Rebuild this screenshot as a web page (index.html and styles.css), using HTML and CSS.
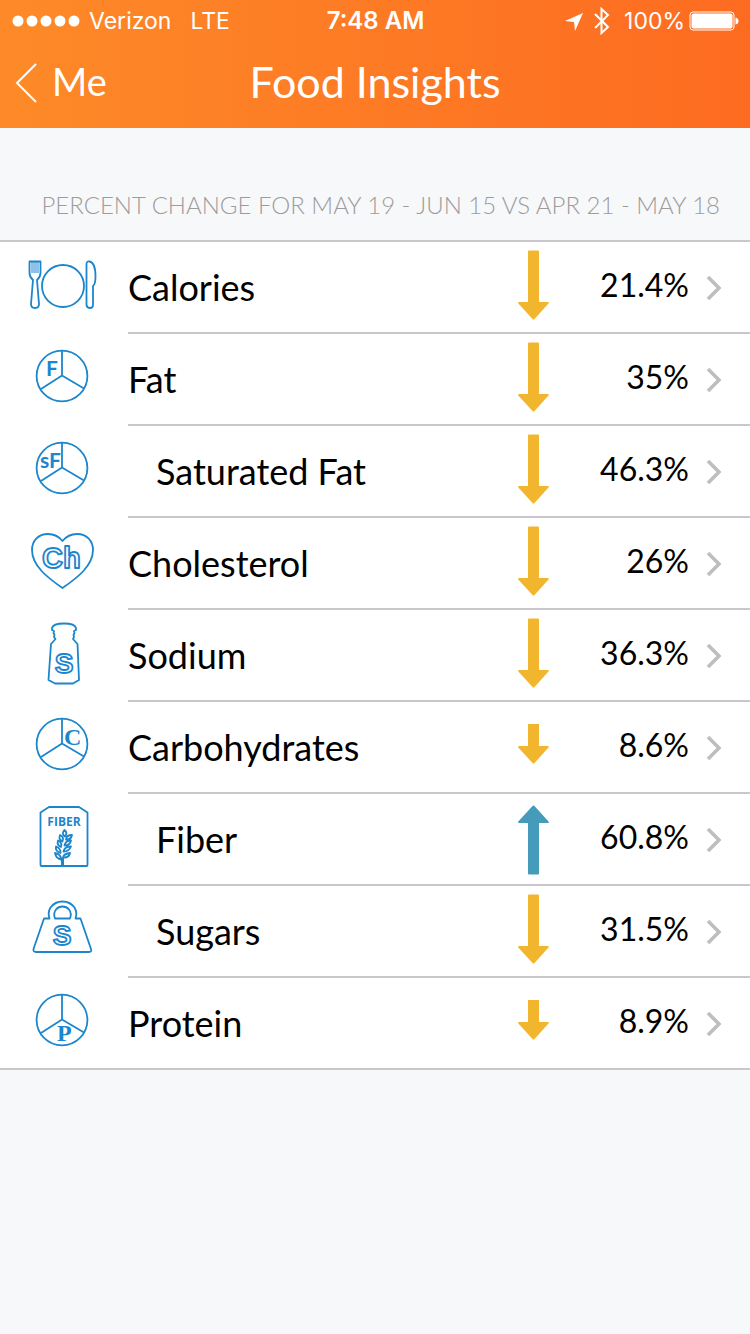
FILE: index.html
```html
<!DOCTYPE html>
<html lang="en">
<head>
    <meta charset="UTF-8">
    <meta name="viewport" content="width=device-width, initial-scale=1.0">
    <title>Food Insights</title>
    <link rel="stylesheet" href="styles.css">
</head>
<body>
    <!-- shared shapes -->
    <svg class="defs" aria-hidden="true">
        <symbol id="pie" viewBox="0 0 72 72">
            <circle cx="36" cy="33" r="25.4"/>
            <path d="M36 8v24.500M36 32.500L15 46M36 32.500L58 45.500"/>
        </symbol>
        <symbol id="down" viewBox="0 0 32 76">
            <path d="M12 1.500h9q1 0 1 1V53h9q1.500.5.5 1.500L17.500 70q-1 1-2 0L1.300 54.500Q.5 53.500 2 53h9V2.500q0-1 1-1z"/>
        </symbol>
        <symbol id="down-small" viewBox="0 0 32 76">
            <path d="M11 15h11v22h9q1.500.5.5 1.500L17.500 54q-1 1-2 0L1.300 38.500Q.5 37.500 2 37h9z"/>
        </symbol>
        <symbol id="up" viewBox="0 0 32 76">
            <path d="M12 73.500h9q1 0 1-1V22h9q1.500-.5.5-1.500L17.500 5q-1-1-2 0L1.300 20.500Q.5 21.500 2 22h9v50.500q0 1 1 1z"/>
        </symbol>
        <symbol id="chevron" viewBox="0 0 16 26">
            <path d="M2 2l11 11L2 24"/>
        </symbol>
    </svg>

    <header class="header">
        <div class="status">
            <div class="status-left">
                <svg class="signal" viewBox="0 0 68 12">
                    <circle cx="6" cy="6" r="5.500"/>
                    <circle cx="20" cy="6" r="5.500"/>
                    <circle cx="34" cy="6" r="5.500"/>
                    <circle cx="48" cy="6" r="5.500"/>
                    <circle cx="62" cy="6" r="5.500"/>
                </svg>
                <span>Verizon</span>
                <span class="network">LTE</span>
            </div>
            <div class="time">7:48 AM</div>
            <div class="status-right">
                <svg class="location" viewBox="0 0 20 20"><path d="M19 2L11 20 10 11 1 10z"/></svg>
                <svg class="bluetooth" viewBox="0 0 18 28"><path d="M2 7l13 13-6.500 6V2L15 8 2 21"/></svg>
                <span>100%</span>
                <svg class="battery" viewBox="0 0 50 20">
                    <rect class="battery-case" x="1" y="1" width="44" height="18" rx="3"/>
                    <rect x="2.500" y="2.500" width="41" height="15" rx="2"/>
                    <path d="M46.500 6.500q3 .5 3 3.500t-3 3.500z"/>
                </svg>
            </div>
        </div>
        <nav class="nav">
            <a class="back" href="#">
                <svg class="back-icon" viewBox="0 0 24 40"><path d="M22 1L3 20l19 19"/></svg>
                <span>Me</span>
            </a>
            <h1>Food Insights</h1>
        </nav>
    </header>

    <main>
        <h2>PERCENT CHANGE FOR MAY 19 - JUN 15 VS APR 21 - MAY 18</h2>

        <ul class="list">
            <li>
                <a class="row" href="#">
                    <svg class="icon" viewBox="0 0 72 72">
                        <circle cx="37" cy="35" r="21"/>
                        <path d="M3.500 10.500h11V22q0 4-3.500 7l2 24q0 4-4 4t-4-4l2-24q-3.500-3-3.500-7z"/>
                        <path class="thin" d="M6 11v11M8 11v11M10 11v11M12 11v11"/>
                        <path d="M60.500 13q0-3 3-2.500 6 1 6 15 0 8-2.500 9.500V54q0 3-3 3t-3.500-3z"/>
                    </svg>
                    <div class="row-body">
                        <span class="name">Calories</span>
                        <svg class="arrow"><use href="#down"/></svg>
                        <span class="value">21.4%</span>
                        <svg class="chevron"><use href="#chevron"/></svg>
                    </div>
                </a>
            </li>
            <li>
                <a class="row" href="#">
                    <svg class="icon" viewBox="0 0 72 72">
                        <use href="#pie" width="72" height="72"/>
                        <text class="letter-fat" x="20" y="33">F</text>
                    </svg>
                    <div class="row-body">
                        <span class="name">Fat</span>
                        <svg class="arrow"><use href="#down"/></svg>
                        <span class="value">35%</span>
                        <svg class="chevron"><use href="#chevron"/></svg>
                    </div>
                </a>
            </li>
            <li>
                <a class="row" href="#">
                    <svg class="icon" viewBox="0 0 72 72">
                        <use href="#pie" width="72" height="72"/>
                        <text class="letter-fat" x="14" y="33">sF</text>
                    </svg>
                    <div class="row-body">
                        <span class="name sub">Saturated Fat</span>
                        <svg class="arrow"><use href="#down"/></svg>
                        <span class="value">46.3%</span>
                        <svg class="chevron"><use href="#chevron"/></svg>
                    </div>
                </a>
            </li>
            <li>
                <a class="row" href="#">
                    <svg class="icon" viewBox="0 0 72 72">
                        <path d="M36.500 14C32 8.500 27 7 22 7 12 7 6 14 6 23c0 16 16 28 30.500 38C51 51 67 39 67 23 67 14 61 7 51 7c-5 0-10 1.500-14.500 7z"/>
                        <text class="outline-ch" x="16" y="41">Ch</text>
                    </svg>
                    <div class="row-body">
                        <span class="name">Cholesterol</span>
                        <svg class="arrow"><use href="#down"/></svg>
                        <span class="value">26%</span>
                        <svg class="chevron"><use href="#chevron"/></svg>
                    </div>
                </a>
            </li>
            <li>
                <a class="row" href="#">
                    <svg class="icon" viewBox="0 0 72 72">
                        <path d="M26 9q1-4.500 12-4.500T50 9v2l-2 1 .5 2-1 2 .5 2-1 2 4.500 5L53 61l-6 3.500H29L22.500 61 25 25l4.500-5-1.500-2 .5-2-1-2 .5-2-2-1z"/>
                        <text class="outline-s" x="38" y="54">S</text>
                    </svg>
                    <div class="row-body">
                        <span class="name">Sodium</span>
                        <svg class="arrow"><use href="#down"/></svg>
                        <span class="value">36.3%</span>
                        <svg class="chevron"><use href="#chevron"/></svg>
                    </div>
                </a>
            </li>
            <li>
                <a class="row" href="#">
                    <svg class="icon" viewBox="0 0 72 72">
                        <use href="#pie" width="72" height="72"/>
                        <text class="letter" x="38" y="34">C</text>
                    </svg>
                    <div class="row-body">
                        <span class="name">Carbohydrates</span>
                        <svg class="arrow"><use href="#down-small"/></svg>
                        <span class="value">8.6%</span>
                        <svg class="chevron"><use href="#chevron"/></svg>
                    </div>
                </a>
            </li>
            <li>
                <a class="row" href="#">
                    <svg class="icon" viewBox="0 0 72 72">
                        <path d="M23 4h30l8.500 5.500V62q0 1-1 1h-45q-1 0-1-1V9.500z"/>
                        <text class="fiber" x="38" y="23" text-anchor="middle">FIBER</text>
                        <path class="stem" d="M36.500 62v-7"/>
                        <path class="grain" d="M38.500 27q3.500 3 .5 6.500-4-3-.5-6.500zM34 32q4.500 2 2.500 6.500-4.500-2-2.500-6.500zM46 32q-1 5-6 4.500.5-4.500 6-4.500zM32 37.500q4.500 2 3 6.500-4.500-2-3-6.500zM45 37.500q-1 5-6.500 5 1-5 6.500-5zM30 43.500q5 2 4.500 6.500-5.500-2-4.500-6.500zM45 43.500q-2 5-7.500 5 1-5 7.500-5zM29 50q6 1 6 6.500-5-1-6-6.500zM44 50q-1 5-7 4.500 1-4 7-4.500z"/>
                    </svg>
                    <div class="row-body">
                        <span class="name sub">Fiber</span>
                        <svg class="arrow arrow-up"><use href="#up"/></svg>
                        <span class="value">60.8%</span>
                        <svg class="chevron"><use href="#chevron"/></svg>
                    </div>
                </a>
            </li>
            <li>
                <a class="row" href="#">
                    <svg class="icon" viewBox="0 0 72 72">
                        <path d="M18 23.500h5.500q-2-6 1-11Q29 6.500 36.500 6.500t12 6q3 5 1 11h5L65 54q1 3-2 3H10q-3 0-2.500-3z"/>
                        <path d="M29 23.500q-2-5 1-9 2.500-3 6.500-3t6.500 3q3 4 1 9z"/>
                        <text class="outline-s" x="36" y="50">S</text>
                    </svg>
                    <div class="row-body">
                        <span class="name sub">Sugars</span>
                        <svg class="arrow"><use href="#down"/></svg>
                        <span class="value">31.5%</span>
                        <svg class="chevron"><use href="#chevron"/></svg>
                    </div>
                </a>
            </li>
            <li>
                <a class="row" href="#">
                    <svg class="icon" viewBox="0 0 72 72">
                        <use href="#pie" width="72" height="72"/>
                        <text class="letter" x="31" y="54">P</text>
                    </svg>
                    <div class="row-body">
                        <span class="name">Protein</span>
                        <svg class="arrow"><use href="#down-small"/></svg>
                        <span class="value">8.9%</span>
                        <svg class="chevron"><use href="#chevron"/></svg>
                    </div>
                </a>
            </li>
        </ul>
    </main>
</body>
</html>
```
FILE: styles.css
```css
* {
    box-sizing: border-box;
}
body {
    margin: 0;
    background-color: #f7f8fa;
    font-family: Lato, sans-serif;
    color: #000;
}
a {
    color: inherit;
    text-decoration: none;
}
svg {
    flex: none;
}
.defs {
    display: none;
}

/* header */
.header {
    background: linear-gradient(to right, #fd8a28, #fd6b21);
    color: #fff;
}
.status {
    display: grid;
    grid-template-columns: 1fr auto 1fr;
    align-items: center;
    height: 40px;
    padding: 1px 11px 0 12px;
    font-family: Inter, sans-serif;
    font-size: 23px;
    line-height: 38px;
}
.status svg {
    fill: #fff;
}
.status-left,
.status-right {
    display: flex;
    align-items: center;
}
.status-left {
    gap: 9px;
}
.status-right {
    justify-content: flex-end;
    gap: 4px;
}
.network {
    margin-left: 10px;
}
.time {
    font-size: 24px;
    font-weight: 600;
}
.signal {
    width: 68px;
    height: 12px;
}
.location {
    width: 20px;
    height: 20px;
    margin-right: 5px;
}
.status .bluetooth {
    width: 18px;
    height: 28px;
    margin-right: 9px;
    fill: none;
    stroke: #fff;
    stroke-width: 2;
}
.battery {
    width: 50px;
    height: 20px;
}
.status .battery-case {
    fill: none;
    stroke: #fff;
    stroke-width: 1;
}
.nav {
    display: grid;
    grid-template-columns: 1fr auto 1fr;
    align-items: center;
    height: 88px;
    padding: 0 14px 6px;
}
.back {
    display: flex;
    align-items: center;
    gap: 14px;
    font-size: 38px;
}
.back-icon {
    width: 24px;
    height: 40px;
    margin-top: 4px;
    fill: none;
    stroke: #fff;
    stroke-width: 2;
}
h1 {
    margin: 0;
    font-size: 43px;
    font-weight: 400;
}

/* list */
h2 {
    margin: 0;
    padding: 62px 30px 20px;
    color: #9c9c9c;
    font-size: 24px;
    font-weight: 300;
    line-height: 30px;
    text-align: right;
}
.list {
    margin: 0;
    padding: 0;
    list-style: none;
    background-color: #fff;
    border-top: 2px solid #c8c7cc;
    border-bottom: 2px solid #c8c7cc;
}
.row {
    display: flex;
    align-items: center;
    gap: 30px;
    padding-left: 26px;
}
.row-body {
    display: flex;
    flex: 1;
    align-items: center;
    height: 92px;
    padding-right: 28px;
    border-bottom: 2px solid #c8c7cc;
}
li:last-child .row-body {
    height: 90px;
    border-bottom: none;
}
.name {
    flex: 1;
    font-size: 36px;
}
.sub {
    padding-left: 28px;
}
.value {
    width: 140px;
    padding-bottom: 6px;
    font-size: 32px;
    text-align: right;
}
.arrow {
    width: 32px;
    height: 76px;
    fill: #f2b62e;
}
.arrow-up {
    fill: #449cba;
}
.chevron {
    width: 16px;
    height: 26px;
    margin-top: 2px;
    margin-left: 17px;
    fill: none;
    stroke: #bdbdbd;
    stroke-width: 3.5;
}

/* icons */
.icon {
    width: 72px;
    height: 72px;
    margin-bottom: 2px;
    fill: none;
    stroke: #1c86cd;
    stroke-width: 1.8;
    stroke-linejoin: round;
}
li:last-child .icon {
    margin-bottom: 0;
}
.thin {
    stroke-width: 1;
}
.stem {
    stroke-width: 3;
}
.grain {
    stroke-width: 1.8;
}
.letter,
.letter-fat {
    fill: #1c86cd;
    stroke: none;
    font-family: "Liberation Serif", serif;
    font-size: 24px;
    font-weight: 700;
}
.letter-fat {
    font-family: Lato, sans-serif;
    font-size: 21px;
}
.fiber {
    fill: #1c86cd;
    stroke: none;
    font-family: "Open Sans", sans-serif;
    font-size: 12px;
    font-weight: 700;
}
.outline-ch,
.outline-s {
    font-family: "Liberation Sans", sans-serif;
    font-size: 29px;
    font-weight: 700;
}
.outline-s {
    font-size: 28px;
    text-anchor: middle;
}
```
